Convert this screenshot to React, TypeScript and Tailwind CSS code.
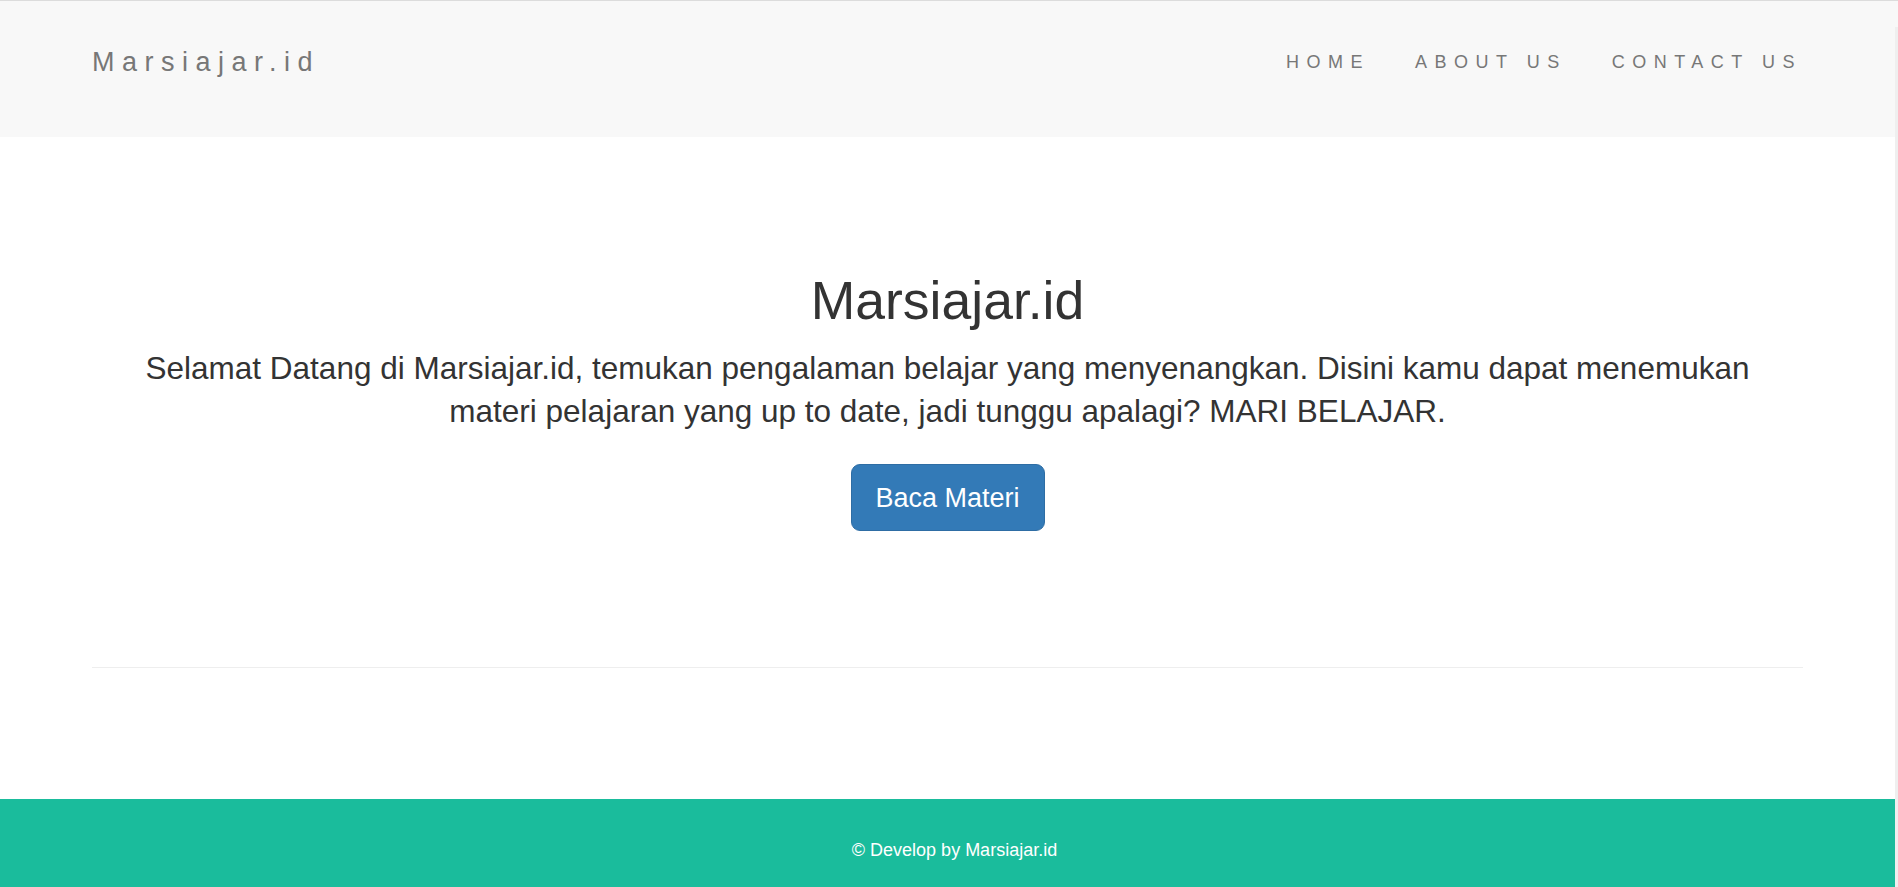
import React from "react";

const font = { fontFamily: '"Liberation Sans", Arial, Helvetica, sans-serif' };

function Header() {
  return (
    <header className="bg-[#f8f8f8] h-[136px] pb-[14px]">
      <div className="flex h-[122px] items-center justify-between pl-[92px] pr-[93px]">
        <a href="#" className="text-[27px] tracking-[7.5px] text-[#777] leading-none">
          Marsiajar.id
        </a>
        <ul className="flex items-center gap-[45px] text-[18px] tracking-[7.5px] text-[#777] leading-none">
          <li>
            <a href="#">HOME</a>
          </li>
          <li>
            <a href="#">ABOUT US</a>
          </li>
          <li>
            <a href="#">CONTACT US</a>
          </li>
        </ul>
      </div>
    </header>
  );
}

function Hero() {
  return (
    <section className="pt-[135px] flex flex-col items-center text-center text-[#333]">
      <h1 className="text-[53.5px] leading-[57px] mb-[18px]">Marsiajar.id</h1>
      <p className="text-[31.5px] leading-[43px] max-w-[1650px]">
        Selamat Datang di Marsiajar.id, temukan pengalaman belajar yang menyenangkan. Disini kamu dapat
        menemukan materi pelajaran yang up to date, jadi tunggu apalagi? MARI BELAJAR.
      </p>
      <a
        href="#"
        className="mt-[31px] inline-block h-[67px] w-[194px] rounded-[9px] border border-[#2e6da4] bg-[#337ab7] text-[27px] leading-[66px] text-white"
      >
        Baca Materi
      </a>
    </section>
  );
}

export default function App() {
  return (
    <div className="flex w-full border-t border-[#dcdcdc] bg-white" style={font}>
      <div className="flex-1 flex flex-col">
        <Header />
        <Hero />
        <div className="px-[92px] mt-[136px]">
          <hr className="border-0 border-t border-[#eee]" />
        </div>
        <footer className="mt-[131px] h-[88px] bg-[#1abc9c] pt-[38px] pl-[14px] text-center text-[18px] leading-[26px] text-white">
          © Develop by Marsiajar.id
        </footer>
      </div>
      <div className="w-[3px] flex flex-col">
        <div className="h-[26px] bg-[#f8f8f8]" />
        <div className="flex-1 bg-[#efefef]" />
      </div>
    </div>
  );
}
